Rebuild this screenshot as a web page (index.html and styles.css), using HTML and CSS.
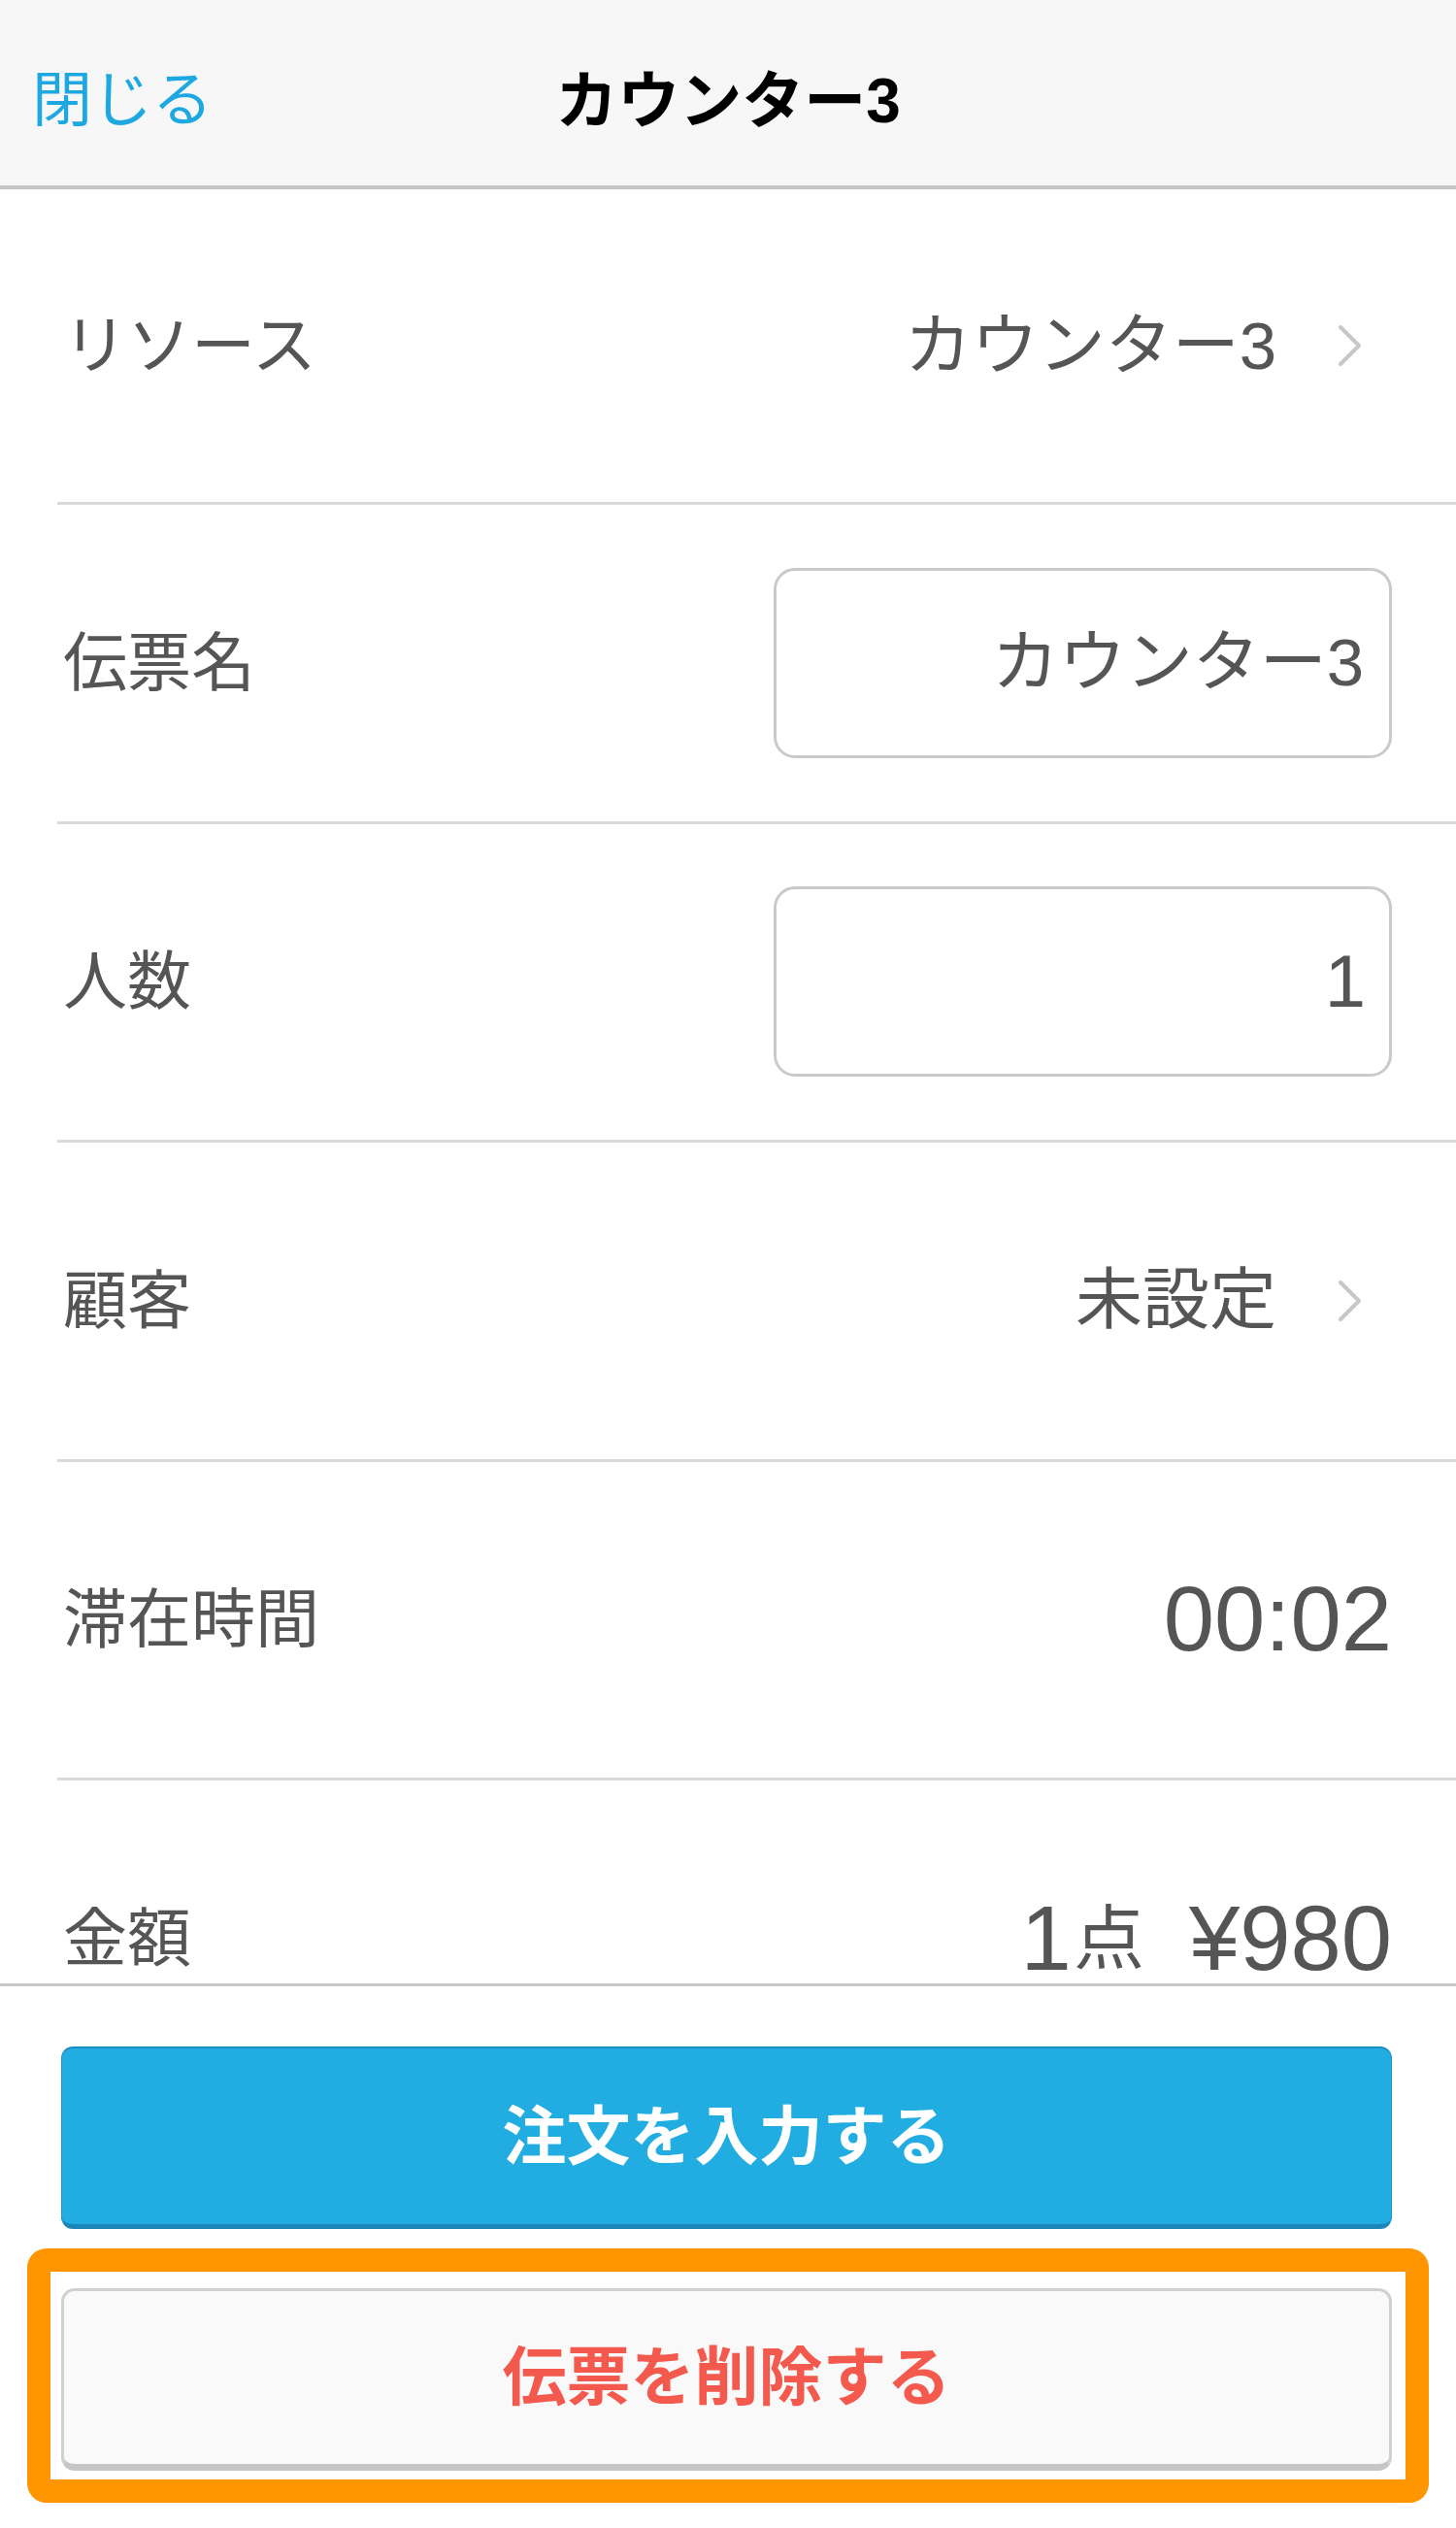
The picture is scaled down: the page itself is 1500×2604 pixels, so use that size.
FILE: index.html
```html
<!DOCTYPE html>
<html lang="ja">
<head>
<meta charset="utf-8">
<title>カウンター3</title>
<link rel="stylesheet" href="styles.css">
</head>
<body>
<div class="app">
  <header class="navbar">
    <a class="nav-close">閉じる</a>
    <h1 class="nav-title">カウンター3</h1>
    <span class="nav-spacer"></span>
  </header>

  <main class="list">
    <div class="row row-first">
      <span class="label">リソース</span>
      <span class="value link">カウンター3
        <svg class="chev" width="28" height="46" viewBox="0 0 28 46"><path d="M4 4 L23 23 L4 42" fill="none" stroke="#c7c7cc" stroke-width="4" stroke-linecap="round" stroke-linejoin="round"/></svg>
      </span>
    </div>
    <div class="row">
      <span class="label">伝票名</span>
      <div class="field">カウンター3</div>
    </div>
    <div class="row">
      <span class="label">人数</span>
      <div class="field num">1</div>
    </div>
    <div class="row">
      <span class="label">顧客</span>
      <span class="value link">未設定
        <svg class="chev" width="28" height="46" viewBox="0 0 28 46"><path d="M4 4 L23 23 L4 42" fill="none" stroke="#c7c7cc" stroke-width="4" stroke-linecap="round" stroke-linejoin="round"/></svg>
      </span>
    </div>
    <div class="row">
      <span class="label">滞在時間</span>
      <span class="value big">00:02</span>
    </div>
    <div class="row">
      <span class="label">金額</span>
      <span class="value big"><span>1</span><span class="unit">点</span><span class="yen">¥980</span></span>
    </div>
  </main>

  <footer class="footer">
    <button class="btn btn-primary">注文を入力する</button>
    <div class="highlight">
      <button class="btn btn-delete">伝票を削除する</button>
    </div>
  </footer>
</div>
</body>
</html>
```

FILE: styles.css
```css
* { box-sizing: border-box; }

html, body {
  margin: 0;
  padding: 0;
  background: #ffffff;
}

body {
  font-family: "Liberation Sans", "Noto Sans CJK JP", sans-serif;
  color: #555555;
}

.app {
  width: 1500px;
  height: 2604px;
  display: flex;
  flex-direction: column;
  overflow: hidden;
}

/* ---------- header ---------- */
.navbar {
  flex: 0 0 195px;
  display: grid;
  grid-template-columns: 1fr auto 1fr;
  align-items: center;
  padding: 16px 0 0 0;
  background: #f7f7f7;
  border-bottom: 4px solid #c6c6c6;
}

.nav-close {
  margin-left: 33px;
  font-size: 62px;
  color: #1ea8e1;
  line-height: 1;
}

.nav-title {
  margin: 0;
  font-size: 64px;
  font-weight: 700;
  color: #000000;
  line-height: 1;
}

/* ---------- list ---------- */
.list {
  flex: 1 1 auto;
  overflow: hidden;
  padding-left: 59px;
}

.row {
  height: 328.5px;
  display: flex;
  align-items: center;
  justify-content: space-between;
  padding: 0 66px 0 6px;
  border-bottom: 3px solid #dadade;
  flex-shrink: 0;
}

.row-first {
  height: 325px;
}

.label {
  font-size: 66px;
  line-height: 1;
  color: #555555;
}

.value {
  font-size: 69px;
  line-height: 1;
  color: #555555;
  display: flex;
  align-items: center;
}

.value.link {
  padding-right: 29px;
}

.chev {
  margin-left: 62px;
  display: block;
}

.value.big {
  font-size: 94px;
}

.unit {
  font-size: 73px;
  margin-left: 2px;
}

.yen {
  margin-left: 46px;
}

.field {
  width: 637px;
  height: 196px;
  border: 3px solid #cacaca;
  border-radius: 22px;
  display: flex;
  align-items: center;
  justify-content: flex-end;
  padding-right: 26px;
  font-size: 69px;
  line-height: 1;
  color: #555555;
}

.field.num {
  font-size: 76px;
  padding-right: 24px;
}

/* ---------- footer ---------- */
.footer {
  flex: 0 0 561px;
  border-top: 3px solid #c8c8c8;
  background: #ffffff;
  padding: 62px 28px 0 28px;
  display: flex;
  flex-direction: column;
}

.btn {
  display: block;
  width: 100%;
  height: 188px;
  font-family: "Liberation Sans", "Noto Sans CJK JP", sans-serif;
  font-size: 66px;
  font-weight: 700;
  line-height: 1;
  cursor: pointer;
}

.btn-primary {
  width: auto;
  margin: 0 38px 0 35px;
  background: #22ade2;
  color: #ffffff;
  border: 1px solid #1d96c9;
  border-top: 2px solid #1a8ec2;
  border-bottom: 5px solid #1b86b8;
  border-radius: 12px;
}

.highlight {
  margin-top: 20px;
  height: 262px;
  border: 24px solid #ff9600;
  border-radius: 20px;
  padding: 17px 14px 9px 11px;
}

.btn-delete {
  height: 188px;
  background: #f9f9f9;
  color: #f4594e;
  border: 3px solid #d0d0d0;
  border-bottom: 7px solid #c6c6c6;
  border-radius: 14px;
}
```
